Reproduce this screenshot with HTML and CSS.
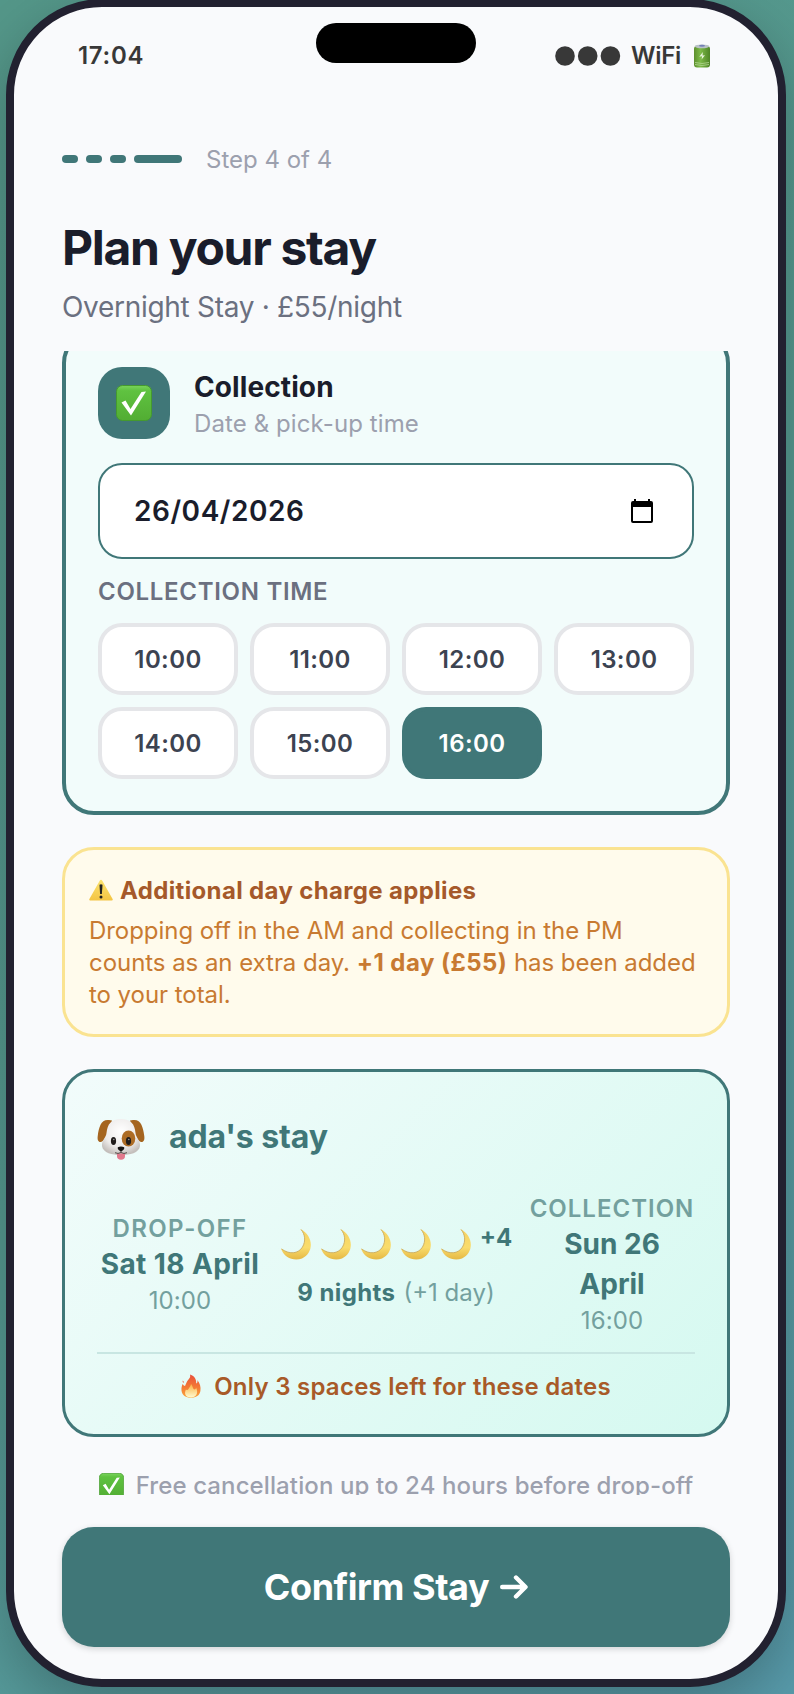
FILE: index.html
```html
<!DOCTYPE html>
<html lang="en">
<head>
<meta charset="utf-8">
<title>Plan your stay</title>
<link rel="stylesheet" href="styles.css">
</head>
<body>
<svg class="defs" width="0" height="0">
  <defs>
    <linearGradient id="green" x1="0" y1="0" x2="0" y2="1"><stop offset="0" stop-color="#7ad45c"/><stop offset=".15" stop-color="#5fc240"/><stop offset="1" stop-color="#52ad33"/></linearGradient>
    <linearGradient id="gold" x1="0" y1="0" x2="0" y2="1"><stop offset="0" stop-color="#f5d262"/><stop offset=".6" stop-color="#f9dc6c"/><stop offset="1" stop-color="#e5b844"/></linearGradient>
    <linearGradient id="amber" x1="0" y1="0" x2="0" y2="1"><stop offset="0" stop-color="#fbe36f"/><stop offset="1" stop-color="#f4c443"/></linearGradient>
    <linearGradient id="cell" x1="0" y1="0" x2="1" y2="0"><stop offset="0" stop-color="#5d8f2e"/><stop offset=".4" stop-color="#7dba48"/><stop offset="1" stop-color="#4e8426"/></linearGradient>
    <radialGradient id="fur" cx=".5" cy=".35" r=".65"><stop offset="0" stop-color="#fff"/><stop offset=".65" stop-color="#eeeceb"/><stop offset="1" stop-color="#c4bfbc"/></radialGradient>
    <linearGradient id="flame" x1="0" y1="0" x2="0" y2="1"><stop offset="0" stop-color="#e8503a"/><stop offset=".55" stop-color="#f47a35"/><stop offset="1" stop-color="#f9a63c"/></linearGradient>
    <linearGradient id="core" x1="0" y1="0" x2="0" y2="1"><stop offset="0" stop-color="#fbb040"/><stop offset="1" stop-color="#fffbd0"/></linearGradient>
    <symbol id="check" viewBox="0 0 36 36">
      <rect x=".5" y=".5" width="35" height="35" rx="6" fill="url(#green)" stroke="#459a2e"/>
      <path d="M5.500 17.500 9.500 15.500 14.500 24 25.500 7 30 6.500 15 30.500Z" fill="#fff"/>
    </symbol>
    <symbol id="moon" viewBox="0 0 32 32">
      <path d="M20.500 1C34 8 34 25 22 30.500C14 33.500 4 30 1 20.500C10 27 18.500 25.500 22.500 19C26 13 25 6 20.500 1Z" fill="url(#gold)"/>
      <path d="M1.500 21C10 27 18.500 25.500 22.500 19C26 13 25 6 21 1.500" fill="none" stroke="#c9ab62" stroke-width=".9"/>
    </symbol>
  </defs>
</svg>
<main class="phone">
  <div class="island"></div>
  <header class="status">
    <span class="clock">17:04</span>
    <span class="signals">
      <svg class="dots" viewBox="0 0 66 20"><circle cx="10" cy="10" r="9.800"/><circle cx="32.700" cy="10" r="9.800"/><circle cx="55.400" cy="10" r="9.800"/></svg>
      <span class="wifi">WiFi</span>
      <svg class="battery" viewBox="0 0 16 24"><rect y="2" width="16" height="21.500" rx="3" fill="url(#cell)"/><ellipse cx="8" cy="2.300" rx="7.300" ry="1.900" fill="#b9c2c6"/><ellipse cx="8" cy="1.700" rx="3" ry="1" fill="#7480b8"/><path d="M1 18.500q7 2 14 0M1 20.500q7 2 14 0" fill="none" stroke="#b5d795" stroke-width=".8"/><path d="M8.800 8 5.300 12.800 8 12.200 7.600 15.500 11 11.300 8.600 11.600Z" fill="#e6f2da"/></svg>
    </span>
  </header>

  <section class="intro">
    <div class="progress">
      <div class="bars"><i></i><i></i><i></i><i class="wide"></i></div>
      <span class="step">Step 4 of 4</span>
    </div>
    <h1>Plan your stay</h1>
    <p class="subtitle">Overnight Stay · £55/night</p>
  </section>

  <div class="scroll">
    <section class="collect">
      <div class="collect-head">
        <div class="tile"><svg><use href="#check"/></svg></div>
        <div class="head-text">
          <h2>Collection</h2>
          <p>Date &amp; pick-up time</p>
        </div>
      </div>
      <div class="date">
        <span>26/04/2026</span>
        <svg viewBox="0 0 22 24"><path fill="#000" fill-rule="evenodd" d="M3 0h2v2h12V0h2v2h1a2 2 0 0 1 2 2v18a2 2 0 0 1-2 2H2a2 2 0 0 1-2-2V4a2 2 0 0 1 2-2h1ZM2 8v14h18V8Z"/></svg>
      </div>
      <h3>COLLECTION TIME</h3>
      <div class="slots">
        <button>10:00</button><button>11:00</button><button>12:00</button><button>13:00</button>
        <button>14:00</button><button>15:00</button><button class="on">16:00</button>
      </div>
    </section>

    <section class="notice">
      <h2><svg viewBox="0 0 24 22"><path d="M12 .8Q12.800.8 13.300 1.800L23.600 20Q24.200 21.600 22.800 21.600H1.200Q-.2 21.600.4 20L10.700 1.800Q11.200.8 12 .8Z" fill="url(#amber)"/><path d="M10.500 5.800q1.500-1.200 3 0L12.900 15h-1.800Z" fill="#222"/><circle cx="12" cy="18" r="1.500" fill="#222"/></svg><span>Additional day charge applies</span></h2>
      <p>Dropping off in the AM and collecting in the PM<br>counts as an extra day. <b>+1 day (£55)</b> has been added<br>to your total.</p>
    </section>

    <section class="stay">
      <div class="who">
        <svg viewBox="0 0 48 42"><path d="M12 2C4 1 2 9 .8 17.500C0 22 1.500 24.500 4 24C8 23 12 14 15 2.500Z" fill="#a5651f"/><path d="M36 2c8-1 10 7 11.200 15.500C48 22 46.500 24.500 44 24C40 23 36 14 33 2.500Z" fill="#a5651f"/><path d="M24 1C34 1 37.500 6 38.500 15C39 20 43.500 22 43 28C42 35 33 37 24 37S6 35 5 28C4.500 22 9 20 9.500 15C10.500 6 14 1 24 1Z" fill="url(#fur)"/><ellipse cx="31.500" cy="20.500" rx="6.800" ry="8" fill="#ad6c25"/><ellipse cx="16.500" cy="23" rx="2.600" ry="4" fill="#211d1c"/><ellipse cx="31.500" cy="23" rx="2.600" ry="4" fill="#211d1c"/><circle cx="16.800" cy="21.500" r=".8" fill="#999"/><circle cx="31.800" cy="21.500" r=".8" fill="#999"/><path d="M20 35.500h8v2.500a4 3.800 0 0 1-8 0Z" fill="#e2788c"/><path d="M24 32.500v2.300M24 34.500q-3 1.800-6 .2M24 34.500q3 1.800 6 .2" fill="none" stroke="#554c49" stroke-width="1"/><path d="M20.800 29.300q3.200-1.600 6.400 0 .7 2.400-3.200 4.100-3.900-1.700-3.200-4.100Z" fill="#171515"/></svg>
        <h2>ada's stay</h2>
      </div>
      <div class="trip">
        <div class="end start"><div class="cap">DROP-OFF</div><div class="day">Sat 18 April</div><div class="time">10:00</div></div>
        <div class="mid">
          <div class="moons"><svg><use href="#moon"/></svg><svg><use href="#moon"/></svg><svg><use href="#moon"/></svg><svg><use href="#moon"/></svg><svg><use href="#moon"/></svg><b>+4</b></div>
          <div class="nights"><b>9 nights</b><span>(+1 day)</span></div>
        </div>
        <div class="end"><div class="cap">COLLECTION</div><div class="day">Sun 26<br>April</div><div class="time">16:00</div></div>
      </div>
      <div class="urgent">
        <svg viewBox="0 0 20 24"><path d="M9 .5C14 2 15.500 6 15.200 9.500C16.500 9 16.800 7.500 16.300 6C19 9 20 13 19.400 17C18.600 21.500 15 23.800 10 23.800S1 21.500.5 16.500C.2 13.500 1 11.500 1.600 10C2.500 11 3 12 4 12C5.500 9 5.500 7.500 7.500 5.500C9 4 9.600 2.500 9 .5Z" fill="url(#flame)"/><path d="M1.800 6.500q1.500 1 .8 2.600-1.500-1-.8-2.600Z" fill="#e8503a"/><path d="M10 10C12 12 11.500 15 13.500 15.500C14.500 15.500 15 14.500 15 13.500C17.500 18 16 23.500 10 23.500S3 19 5 15.500C6 16.500 7 16 7.500 15C8.500 13 9.500 12.500 10 10Z" fill="url(#core)"/></svg>
        <span>Only 3 spaces left for these dates</span>
      </div>
    </section>

    <p class="free"><svg><use href="#check"/></svg><span>Free cancellation up to 24 hours before drop-off</span></p>
  </div>

  <button class="confirm"><span>Confirm Stay</span><svg viewBox="0 0 28 24"><path d="M2.200 12H25M16 2.500 25.500 12 16 21.500" fill="none" stroke="#fff" stroke-width="4.400" stroke-linecap="round" stroke-linejoin="round"/></svg></button>
</main>
</body>
</html>
```
FILE: styles.css
```css
* { box-sizing: border-box; }
html, body { margin: 0; height: 1694px; overflow: hidden; }
html { background: #559990; }
body {
  padding: 0 8px 0 6px;
  font-family: Inter, "Liberation Sans", sans-serif;
  font-size: 24px;
  line-height: 32px;
  background: linear-gradient(135deg, #549789 0%, #559990 50%, #589bab 100%);
}
h1, h2, h3, p { margin: 0; }
button { font: inherit; padding: 0; border: 0; }
svg { display: block; flex: none; }
.defs { position: absolute; }

.phone {
  position: relative;
  width: 780px;
  height: 1688px;
  margin-top: -1px;
  border: 8px solid #222130;
  border-radius: 96px;
  background: #f9fafc;
  box-shadow: 0 20px 60px rgba(0, 0, 0, .25);
  display: flex;
  flex-direction: column;
  overflow: hidden;
}
.island {
  position: absolute;
  left: 302px;
  top: 16px;
  width: 160px;
  height: 40px;
  border-radius: 20px;
  background: #000;
}
.status {
  display: flex;
  justify-content: space-between;
  padding: 33px 68px 0 64px;
  font-weight: 600;
  color: #383838;
}
.clock { letter-spacing: .7px; }
.signals { display: flex; align-items: center; }
.dots { width: 66px; height: 20px; fill: #383838; }
.wifi { margin-left: 10px; letter-spacing: -.3px; }
.battery { width: 16px; height: 24px; margin: 0 0 1px 13px; }

.intro { padding: 71px 48px 24px; }
.progress { display: flex; align-items: center; gap: 24px; height: 32px; }
.bars { display: flex; gap: 8px; }
.bars i { width: 16px; height: 8px; border-radius: 4px; background: #407778; }
.bars .wide { width: 48px; }
.step { padding-top: 2px; color: #9ca0ae; }
h1 {
  margin-top: 45px;
  font-size: 48px;
  line-height: 56px;
  font-weight: 700;
  color: #1a1d2b;
  letter-spacing: -1.3px;
}
.subtitle { margin-top: 11px; font-size: 28px; line-height: 40px; color: #6b7080; letter-spacing: -.3px; }

.scroll { height: 1144px; overflow: hidden; padding: 0 48px; flex: none; }
.collect {
  margin-top: -20px;
  padding: 32px;
  border: 4px solid #407778;
  border-radius: 32px;
  background: #f2fcfb;
}
.collect-head { display: flex; gap: 24px; height: 72px; }
.tile { width: 72px; height: 72px; border-radius: 24px; background: #407778; display: grid; place-items: center; }
.tile svg { width: 36px; height: 36px; }
.head-text { padding-top: 2px; letter-spacing: .1px; }
.head-text h2 { font-size: 28px; line-height: 36px; font-weight: 700; color: #1a1d2b; }
.head-text p { margin-top: 3px; color: #9ca0ae; }
.date {
  display: flex;
  align-items: center;
  justify-content: space-between;
  height: 96px;
  margin-top: 24px;
  padding: 0 39px 0 34px;
  border: 2px solid #407778;
  border-radius: 24px;
  background: #fff;
  font-size: 28px;
  font-weight: 600;
  color: #1a1d2b;
  letter-spacing: .55px;
}
.date svg { width: 22px; height: 24px; }
h3 { margin: 17px 0 15px; font-size: 24px; font-weight: 600; color: #6b7080; letter-spacing: .7px; }
.slots { display: grid; grid-template-columns: repeat(4, 1fr); gap: 12px; }
.slots button {
  height: 72px;
  padding-top: 2px;
  border: 4px solid #e5e6e9;
  border-radius: 24px;
  background: #fff;
  font-weight: 600;
  color: #3c4351;
  letter-spacing: .4px;
}
.slots .on { border-color: #407778; background: #407778; color: #fff; }

.notice {
  margin-top: 32px;
  padding: 25px 24px 23px;
  border: 3px solid #fae391;
  border-radius: 32px;
  background: #fffbec;
  color: #c87a31;
}
.notice h2 { display: flex; align-items: center; gap: 7px; font-size: 24px; font-weight: 700; color: #a5592a; letter-spacing: .35px; }
.notice svg { width: 24px; height: 22px; margin-bottom: 2px; }
.notice p { margin-top: 8px; white-space: nowrap; letter-spacing: -.05px; }
.notice b { letter-spacing: .45px; }

.stay {
  margin-top: 32px;
  padding: 32px;
  border: 3px solid #407778;
  border-radius: 32px;
  background: linear-gradient(135deg, #f2fcfb, #d5f9f0);
  color: #407778;
}
.who { display: flex; align-items: center; gap: 24px; height: 64px; }
.who svg { width: 48px; height: 42px; margin-top: 5px; }
.who h2 { padding-top: 2px; font-size: 32px; line-height: 40px; font-weight: 700; letter-spacing: -.1px; }
.trip {
  display: grid;
  grid-template-columns: 166px 1fr 166px;
  align-items: center;
  margin-top: 24px;
  padding-bottom: 16px;
  text-align: center;
}
.cap { height: 32px; padding-top: 1px; font-weight: 600; letter-spacing: 1px; color: #73a09e; white-space: nowrap; }
.day { font-size: 28px; line-height: 40px; font-weight: 700; white-space: nowrap; }
.time { height: 32px; padding-top: 1px; color: #73a09e; letter-spacing: .1px; }
.start .cap { letter-spacing: 1.35px; }
.start .day { letter-spacing: .4px; }
.moons { display: flex; justify-content: center; gap: 8px; height: 48px; align-items: center; }
.moons svg { width: 32px; height: 32px; }
.moons b { margin-top: -13px; }
.nights { display: flex; justify-content: center; gap: 8px; height: 31px; margin-top: 9px; white-space: nowrap; }
.nights b { letter-spacing: .4px; }
.nights span { color: #73a09e; }
.urgent {
  display: flex;
  align-items: center;
  justify-content: center;
  gap: 13px;
  height: 50px;
  padding-top: 18px;
  border-top: 2px solid #c8e6e2;
  font-weight: 600;
  color: #a85a28;
  letter-spacing: .25px;
}
.urgent svg { width: 20px; height: 24px; margin-bottom: 2px; }
.free { display: flex; justify-content: center; gap: 12px; margin-top: 33px; font-weight: 500; color: #9ca0ae; white-space: nowrap; letter-spacing: .11px; }
.free svg { width: 25px; height: 25px; margin-top: 3px; }

.confirm {
  display: flex;
  align-items: center;
  justify-content: center;
  gap: 11px;
  flex: none;
  height: 120px;
  margin: 32px 48px 0;
  border-radius: 32px;
  background: #407778;
  box-shadow: 0 2px 6px rgba(0, 0, 0, .16);
  font-size: 36px;
  font-weight: 700;
  color: #fff;
  letter-spacing: -.45px;
}
.confirm svg { width: 28px; height: 24px; }
```
